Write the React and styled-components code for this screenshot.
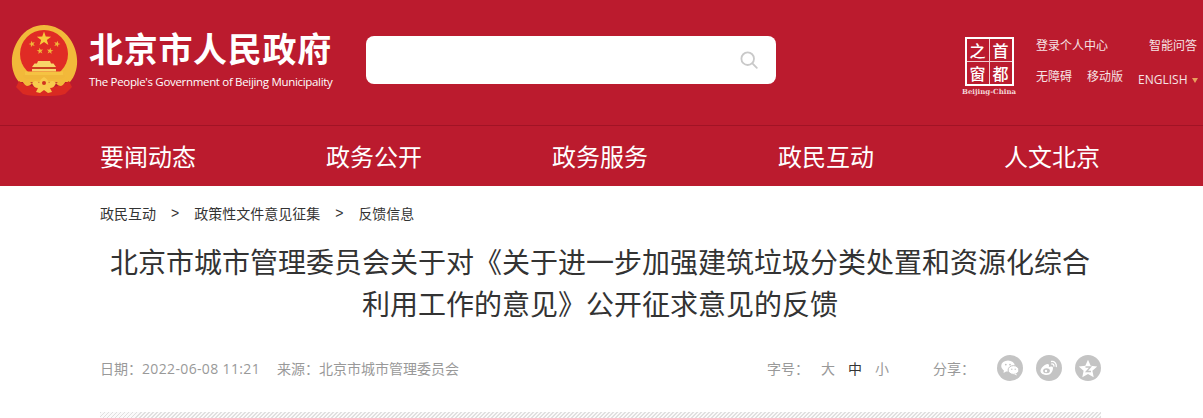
import React from 'react';
import styled, { createGlobalStyle } from 'styled-components';

const GlobalStyle = createGlobalStyle`
  html, body {
    margin: 0;
    padding: 0;
    background: #fff;
    overflow: hidden;
  }
  body {
    font-family: "Noto Sans CJK SC", "Liberation Sans", sans-serif;
  }
`;

const Page = styled.div`
  width: 1203px;
  height: 418px;
  overflow: hidden;
`;

const Header = styled.header`
  height: 125px;
  background: #bb1b2e;
  border-bottom: 1px solid #a11325;
  display: flex;
  align-items: flex-start;
`;

const Brand = styled.div`
  width: 366px;
  height: 100%;
  padding: 24px 0 0 11px;
  box-sizing: border-box;
  display: flex;
  gap: 10px;
  flex: none;
`;

const BrandText = styled.div`
  display: flex;
  flex-direction: column;
  color: #fff;
`;

const BrandName = styled.div`
  font-size: 34px;
  font-weight: 700;
  line-height: 48px;
  letter-spacing: 0.7px;
  white-space: nowrap;
`;

const BrandEnglish = styled.div`
  font-family: "Open Sans", sans-serif;
  font-size: 11.5px;
  line-height: 16px;
  margin-top: 2px;
  letter-spacing: -0.32px;
  white-space: nowrap;
`;

const Search = styled.div`
  width: 410px;
  height: 48px;
  margin-top: 36px;
  background: #fff;
  border-radius: 8px;
  display: flex;
  align-items: center;
  justify-content: flex-end;
  padding-right: 18px;
  box-sizing: border-box;
  flex: none;
`;

const TopRight = styled.div`
  margin-left: 186px;
  padding-top: 37px;
  display: flex;
  flex: none;
`;

const CapitalLogo = styled.div`
  width: 54px;
  display: flex;
  flex-direction: column;
  align-items: center;
`;

const LogoGrid = styled.div`
  width: 49px;
  height: 49px;
  border: 2px solid #fff;
  box-sizing: border-box;
  display: grid;
  grid-template-columns: 1fr 1fr;
  grid-template-rows: 1fr 1fr;
  gap: 1px;
  background: #f3ccd0;
`;

const LogoCell = styled.div`
  background: #bb1b2e;
  color: #fff;
  font-size: 16px;
  font-weight: 500;
  line-height: 22px;
  text-align: center;
`;

const LogoCaption = styled.div`
  font-family: "DejaVu Serif", serif;
  font-size: 7px;
  font-weight: 700;
  line-height: 9px;
  margin-top: 1px;
  color: #f3d5d8;
  white-space: nowrap;
`;

const Links = styled.div`
  margin-left: 20px;
  width: 164px;
  display: flex;
  flex-direction: column;
  gap: 15px;
  color: #f6e3e5;
  font-size: 12px;
  line-height: 16px;
`;

const LinkRow = styled.div`
  display: flex;
  align-items: flex-start;
  white-space: nowrap;
`;

const TopLink = styled.span`
  margin-left: ${(p) => p.$left || 0}px;
`;

const English = styled.span`
  font-family: "Open Sans", sans-serif;
  font-size: 12px;
  margin-left: 15px;
  margin-top: 4px;
  display: flex;
  align-items: center;
  gap: 4px;
`;

const Caret = styled.i`
  width: 0;
  height: 0;
  border-left: 3px solid transparent;
  border-right: 3px solid transparent;
  border-top: 5px solid #e8a05c;
`;

const Nav = styled.nav`
  height: 60px;
  background: #bb1b2e;
  padding-left: 100px;
  display: flex;
  align-items: center;
  gap: 130px;
`;

const NavItem = styled.a`
  color: #fff;
  font-size: 24px;
  line-height: 60px;
  white-space: nowrap;
`;

const Content = styled.main`
  width: 1000px;
  margin-left: 100px;
`;

const Crumbs = styled.div`
  height: 54px;
  display: flex;
  align-items: center;
  font-size: 14px;
  color: #333;
`;

const CrumbSep = styled.span`
  font-family: "Liberation Sans", sans-serif;
  margin: 0 15px;
`;

const Title = styled.h1`
  margin: 0;
  font-size: 28px;
  line-height: 42px;
  font-weight: 400;
  color: #333;
  text-align: center;
`;

const Meta = styled.div`
  height: 30px;
  margin: 29px -1px 0 0;
  display: flex;
  align-items: center;
  font-size: 14px;
  color: #999;
`;

const MetaDate = styled.span`
  white-space: nowrap;
`;

const MetaNumber = styled.span`
  font-family: "Open Sans", sans-serif;
  letter-spacing: 0.35px;
`;

const MetaSource = styled.span`
  margin-left: 17px;
  white-space: nowrap;
`;

const Tools = styled.div`
  margin-left: auto;
  display: flex;
  align-items: center;
  color: #999;
`;

const SizeOption = styled.span`
  margin-left: ${(p) => p.$left}px;
  color: ${(p) => (p.$active ? '#333' : '#999')};
`;

const ShareLabel = styled.span`
  margin-left: 44px;
  margin-right: 22px;
`;

const ShareButton = styled.span`
  width: 26px;
  height: 26px;
  border-radius: 50%;
  background: #c4c4c4;
  display: flex;
  align-items: center;
  justify-content: center;
  margin-left: ${(p) => (p.$first ? 0 : 13)}px;
`;

const Hatch = styled.div`
  height: 6px;
  margin: 29px -1px 0 0;
  background: repeating-linear-gradient(135deg, #e0e0e0 0 1.4px, #fafafa 1.4px 2.83px);
`;

// five point star as polygon points, used for the emblem stars
const starPoints = (cx, cy, r, rot = 0) => {
  const pts = [];
  for (let i = 0; i < 10; i++) {
    const rad = i % 2 === 0 ? r : r * 0.4;
    const a = -Math.PI / 2 + rot + (i * Math.PI) / 5;
    pts.push(`${(cx + rad * Math.cos(a)).toFixed(2)},${(cy + rad * Math.sin(a)).toFixed(2)}`);
  }
  return pts.join(' ');
};

const Emblem = () => (
  <svg width="68" height="72" viewBox="0 0 68 72" style={{ flex: 'none' }}>
    <path d="M8 58C-2 46-1 28 8 15 14 6 23 1 33 1s20 5 26 14c9 13 10 31 0 43z" fill="#f2b93a" />
    <circle cx="33" cy="30" r="24" fill="#e02b25" />
    <polygon points={starPoints(33, 15, 7.5)} fill="#f8cb3c" />
    <polygon points={starPoints(21, 20, 3.4, -0.3)} fill="#f0b73a" />
    <polygon points={starPoints(46, 20, 3.4, 0.3)} fill="#f0b73a" />
    <polygon points={starPoints(29, 27, 3.4, -0.15)} fill="#f0b73a" />
    <polygon points={starPoints(39, 27, 3.4, 0.15)} fill="#f0b73a" />
    <path d="M27 37h12l1 2.500h2.500L45 43H21l2.500-3.500H26z" fill="#f8d469" />
    <path d="M22 43h22v2H22z" fill="#c9401f" />
    <path d="M21 45h24v2.500H21z" fill="#f8d469" />
    <path d="M14 47.500h38v3.500H14z" fill="#f5c342" />
    <path d="M12 51h42v1.500l-4 2.500H16l-4-2.500z" fill="#f0b73a" />
    <path d="M8 57c7 5 14 6 25 6s18-1 25-6l3 6-7 7c-6 2-14 2-21 2s-15 0-21-2l-7-7z" fill="#da2a22" />
    <path d="M10 53c6 3 8 5 11 6-1 2-3 3-5 3-3-1-5-5-6-9zM56 53c-6 3-8 5-11 6 1 2 3 3 5 3 3-1 5-5 6-9z" fill="#f2b93a" />
    <path d="M21 59c3-3 6-2 7 0 1-3 3-5 5-6 2 1 4 3 5 6 1-2 4-3 7 0-1 3-3 5-6 5l2 4-4 1-4-3-4 3-4-1 2-4c-3 0-5-2-6-5z" fill="#f8ca4d" />
    <circle cx="33" cy="59" r="2" fill="#d0341f" />
  </svg>
);

const SearchIcon = () => (
  <svg width="18" height="18" viewBox="0 0 18 18" fill="none" stroke="#c9c9c9" strokeWidth="1.8">
    <circle cx="7.7" cy="7.7" r="6.3" />
    <path d="M12.4 12.4l4.4 4.4" strokeLinecap="round" />
  </svg>
);

const WechatIcon = () => (
  <svg width="18" height="16" viewBox="0 0 18 16" fill="#fff">
    <ellipse cx="7" cy="6" rx="6.8" ry="5.6" />
    <path d="M3 9.5L2.6 13l3.6-2.2z" />
    <ellipse cx="12.5" cy="10" rx="5.4" ry="4.4" stroke="#c4c4c4" strokeWidth="1" />
    <path d="M15 13.500l1 2-2.800-1.200z" />
    <circle cx="4.800" cy="4.600" r=".9" fill="#c4c4c4" />
    <circle cx="9" cy="4.600" r=".9" fill="#c4c4c4" />
    <circle cx="10.800" cy="9.300" r=".7" fill="#c4c4c4" />
    <circle cx="14.200" cy="9.300" r=".7" fill="#c4c4c4" />
  </svg>
);

const WeiboIcon = () => (
  <svg width="18" height="16" viewBox="0 0 18 16" fill="none">
    <path d="M7 15c-3.600 0-6.500-1.600-6.500-4 0-2.800 4.400-7 7-7 1.800 0 1.800 1.600 1.300 2.900 2-.8 4.200-.7 4.200 1.100C13 11.500 10.500 15 7 15z" fill="#fff" />
    <ellipse cx="6.500" cy="10.800" rx="3.400" ry="2.500" fill="#c4c4c4" />
    <circle cx="6" cy="11" r="1.200" fill="#fff" />
    <path d="M11.500 1.500c2.800-.4 5.200 2 4.800 5M11.800 4c1.300-.2 2.300.9 2.100 2.200" stroke="#fff" strokeWidth="1.300" strokeLinecap="round" />
  </svg>
);

const StarIcon = () => (
  <svg width="20" height="19" viewBox="0 0 20 19">
    <path d="M10 .8l2.700 5.900 6.500.7-4.800 4.400 1.300 6.400L10 15l-5.700 3.200 1.300-6.400L.8 7.400l6.500-.7z" fill="#fff" />
    <path d="M7.500 8h5l-4 4.500h4.500" fill="none" stroke="#c4c4c4" strokeWidth="1.400" />
  </svg>
);

const navItems = ['要闻动态', '政务公开', '政务服务', '政民互动', '人文北京'];

export default function App() {
  return (
    <Page>
      <GlobalStyle />
      <Header>
        <Brand>
          <Emblem />
          <BrandText>
            <BrandName>北京市人民政府</BrandName>
            <BrandEnglish>The People's Government of Beijing Municipality</BrandEnglish>
          </BrandText>
        </Brand>
        <Search>
          <SearchIcon />
        </Search>
        <TopRight>
          <CapitalLogo>
            <LogoGrid>
              <LogoCell>之</LogoCell>
              <LogoCell>首</LogoCell>
              <LogoCell>窗</LogoCell>
              <LogoCell>都</LogoCell>
            </LogoGrid>
            <LogoCaption>Beijing-China</LogoCaption>
          </CapitalLogo>
          <Links>
            <LinkRow>
              <TopLink>登录个人中心</TopLink>
              <TopLink $left={41}>智能问答</TopLink>
            </LinkRow>
            <LinkRow>
              <TopLink>无障碍</TopLink>
              <TopLink $left={15}>移动版</TopLink>
              <English>ENGLISH <Caret /></English>
            </LinkRow>
          </Links>
        </TopRight>
      </Header>
      <Nav>
        {navItems.map((item) => (
          <NavItem key={item}>{item}</NavItem>
        ))}
      </Nav>
      <Content>
        <Crumbs>
          政民互动
          <CrumbSep>&gt;</CrumbSep>
          政策性文件意见征集
          <CrumbSep>&gt;</CrumbSep>
          反馈信息
        </Crumbs>
        <Title>
          北京市城市管理委员会关于对《关于进一步加强建筑垃圾分类处置和资源化综合
          <br />
          利用工作的意见》公开征求意见的反馈
        </Title>
        <Meta>
          <MetaDate>日期：<MetaNumber>2022-06-08 11:21</MetaNumber></MetaDate>
          <MetaSource>来源：北京市城市管理委员会</MetaSource>
          <Tools>
            字号：
            <SizeOption $left={12}>大</SizeOption>
            <SizeOption $left={13} $active>中</SizeOption>
            <SizeOption $left={13}>小</SizeOption>
            <ShareLabel>分享：</ShareLabel>
            <ShareButton $first><WechatIcon /></ShareButton>
            <ShareButton><WeiboIcon /></ShareButton>
            <ShareButton><StarIcon /></ShareButton>
          </Tools>
        </Meta>
        <Hatch />
      </Content>
    </Page>
  );
}
